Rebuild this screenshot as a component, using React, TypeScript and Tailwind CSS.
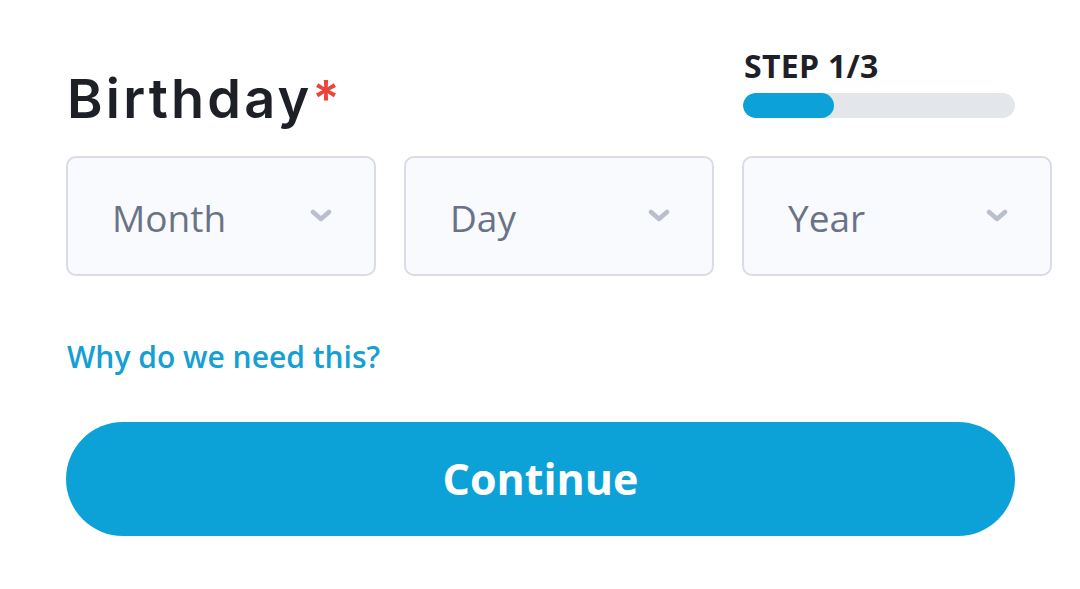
const FIELDS = ["Month", "Day", "Year"];

function Chevron() {
  return (
    <svg width="22" height="14" viewBox="0 0 22 14" className="shrink-0">
      <path d="M3 3 L11 10 L19 3" fill="none" stroke="#b9bfcc" strokeWidth="4.5" strokeLinecap="round" strokeLinejoin="round" />
    </svg>
  );
}

export default function App() {
  return (
    <div className="w-[1080px] h-[589px] bg-white overflow-hidden font-['Open_Sans',sans-serif]">
      <div className="pl-[66px] pt-[50px] w-[1015px]">
        <div className="flex items-end justify-between">
          <h1 className="font-['Inter',sans-serif] font-semibold text-[54px] leading-none text-[#1d2026] tracking-[3.2px] pl-[1px] -mb-[8px] flex items-start">
            Birthday<span className="text-[#e9453a] text-[50px] leading-none mt-[1px] tracking-normal">*</span>
          </h1>
          <div className="w-[272px] flex flex-col">
            <span className="font-bold text-[32px] leading-none text-[#1d2026] tracking-[0.3px] pl-[1px]">STEP 1/3</span>
            <div className="mt-[11px] h-[25px] rounded-full bg-[#e3e6ea] overflow-hidden">
              <div className="h-full w-[91px] rounded-full bg-[#0ca2d8]" />
            </div>
          </div>
        </div>

        <div className="mt-[38px] flex gap-[28px] w-[988px]">
          {FIELDS.map((f) => (
            <div
              key={f}
              className="w-[310px] h-[120px] shrink-0 rounded-[10px] border-2 border-[#d9dce6] bg-[#f9fafd] flex items-center justify-between pl-[44px] pr-[42px]"
            >
              <span className="text-[37px] text-[#6a7386] leading-none pt-[2px]">{f}</span>
              <Chevron />
            </div>
          ))}
        </div>

        <div className="mt-[66px] text-[30px] font-semibold text-[#159fd2] leading-none pl-[1px]">Why do we need this?</div>

        <button className="mt-[50px] w-[949px] h-[114px] rounded-full bg-[#0ca2d8] text-white font-bold text-[43px] flex items-center justify-center">
          Continue
        </button>
      </div>
    </div>
  );
}
